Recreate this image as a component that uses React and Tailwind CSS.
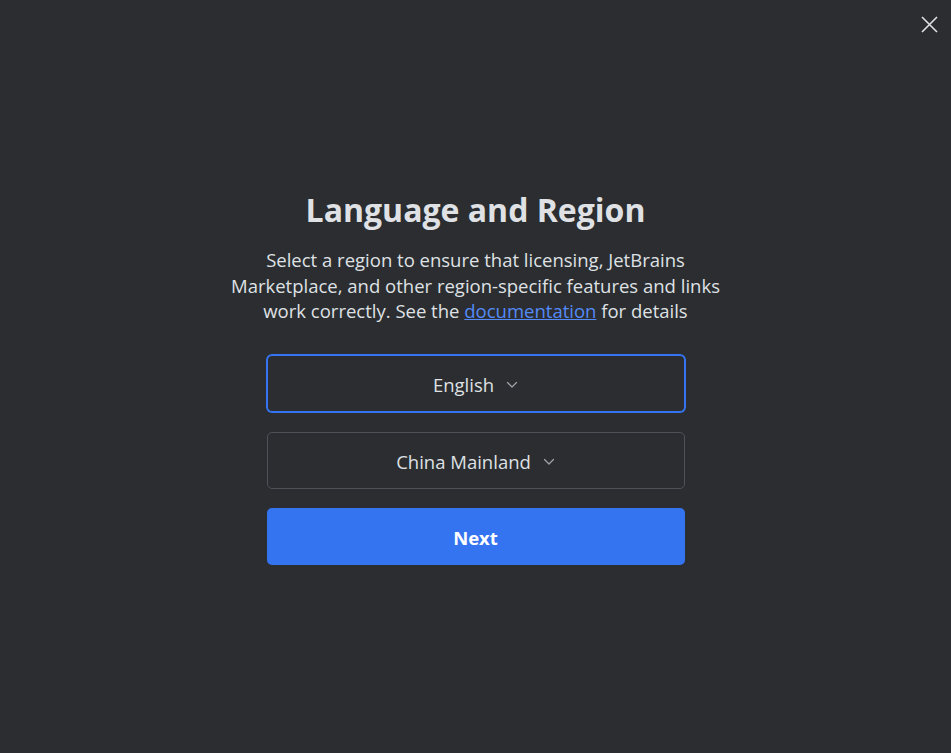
function Chevron() {
  return (
    <svg width="12" height="12" viewBox="0 0 12 12" fill="none" className="ml-[12px]">
      <path d="M1.5 3.5L6 8L10.5 3.5" stroke="#9da0a8" strokeWidth="1.3" strokeLinecap="round" strokeLinejoin="round" />
    </svg>
  );
}

function SelectBox({ label, focused }) {
  return (
    <button
      className={
        'flex h-[57px] w-full items-center justify-center rounded-[5px] border bg-[#2b2d30] pt-[3px] text-[18.5px] text-[#dfe1e5] ' +
        (focused ? 'border-[#3574f0] ring-1 ring-[#3574f0]' : 'border-[#4e5157]')
      }
    >
      <span>{label}</span>
      <Chevron />
    </button>
  );
}

export default function App() {
  return (
    <div
      className="relative flex h-screen w-full flex-col items-center bg-[#2b2d30] text-[#dfe1e5]"
      style={{ fontFamily: '"Open Sans", "Noto Sans", sans-serif' }}
    >
      <button className="absolute right-[13px] top-[16px] text-[#dfe1e5]">
        <svg width="17" height="17" viewBox="0 0 17 17" fill="none">
          <path d="M1 1L16 16M16 1L1 16" stroke="currentColor" strokeWidth="1.6" />
        </svg>
      </button>

      <div className="mt-[188px] flex w-[520px] flex-col items-center">
        <h1 className="text-[32px] font-bold leading-[44px]">Language and Region</h1>
        <p className="mt-[15px] text-center text-[18.5px] leading-[25.5px]">
          Select a region to ensure that licensing, JetBrains
          <br />
          Marketplace, and other region-specific features and links
          <br />
          work correctly. See the{' '}
          <a href="#" className="text-[#548af7] underline">
            documentation
          </a>{' '}
          for details
        </p>

        <div className="mt-[31px] flex w-[418px] flex-col">
          <SelectBox label="English" focused />
          <div className="mt-[20px]">
            <SelectBox label="China Mainland" />
          </div>
          <button className="mt-[19px] h-[57px] w-full rounded-[5px] bg-[#3574f0] pt-[3px] text-[18.5px] font-bold text-white">
            Next
          </button>
        </div>
      </div>
    </div>
  );
}
